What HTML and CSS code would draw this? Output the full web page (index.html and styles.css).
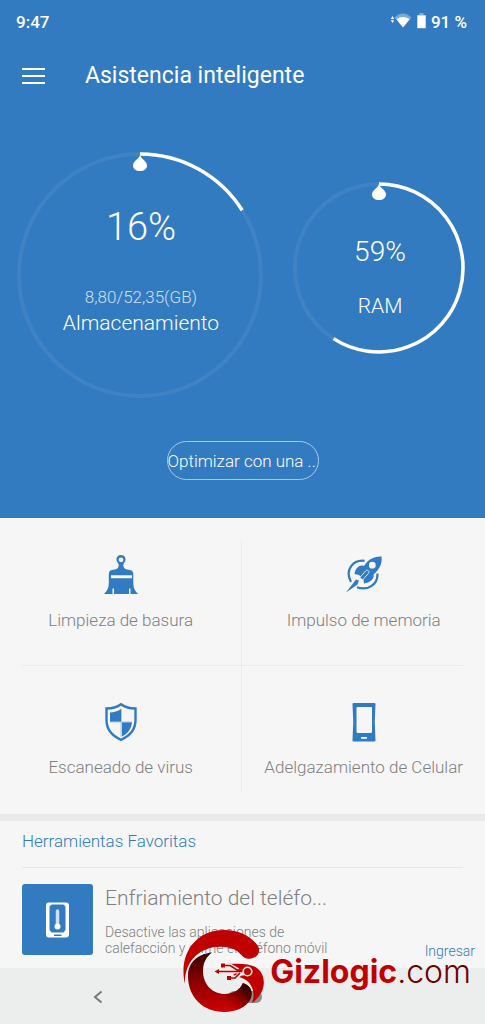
FILE: index.html
```html
<!DOCTYPE html>
<html lang="es">
<head>
<meta charset="utf-8">
<meta name="viewport" content="width=device-width, initial-scale=1">
<title>Asistencia inteligente</title>
<link rel="stylesheet" href="styles.css">
</head>
<body>
<div class="screen">
  <section class="hero">
    <div class="status">
      <span>9:47</span>
      <div class="status-icons">
        <svg width="22" height="16" viewBox="0 0 22 16" aria-hidden="true">
          <path d="M2.500 3 4.200 6H.8ZM2.500 10 .8 7.200H4.200Z" fill="#fff"/>
          <path d="M4.500 4.500Q13-3.500 21.500 4.500L13 14.500Z" fill="#fff" opacity=".35"/>
          <path d="M6.400 6.300Q13 1.500 19.600 6.300L13 14.500Z" fill="#fff"/>
        </svg>
        <svg width="9" height="16" viewBox="0 0 9 16" aria-hidden="true">
          <path d="M2.500 0h4v2H9v13.500H0V2h2.500Z" fill="#fff" opacity=".4"/>
          <path d="M.5 2.500h8v12.500h-8Z" fill="#fff"/>
        </svg>
        <span>91 %</span>
      </div>
    </div>
    <header class="bar">
      <button class="menu" type="button" aria-label="Menú">
        <svg width="23" height="16" viewBox="0 0 23 16"><path d="M0 1h23M0 8h23M0 15h23" stroke="#fff" stroke-width="2"/></svg>
      </button>
      <h1>Asistencia inteligente</h1>
    </header>
    <div class="rings">
      <div class="ring ring-storage">
        <svg width="246" height="246" viewBox="0 0 246 246" aria-hidden="true">
          <circle cx="123" cy="123" r="121" fill="none" stroke="#3f83c4" stroke-width="4"/>
          <path d="M123 2A121 121 0 0 1 225.200 58.200" fill="none" stroke="#fff" stroke-width="3.500"/>
          <path d="M123 3C124 7 130 9 130 13.500C130 17 127 19 123 19S116 17 116 13.500C116 9 122 7 123 3Z" fill="#fff"/>
        </svg>
        <div class="ring-text">
          <strong>16%</strong>
          <small>8,80/52,35(GB)</small>
          <span>Almacenamiento</span>
        </div>
      </div>
      <div class="ring ring-ram">
        <svg width="172" height="172" viewBox="0 0 172 172" aria-hidden="true">
          <circle cx="86" cy="86" r="84" fill="none" stroke="#3f83c4" stroke-width="4"/>
          <path d="M86 2A84 84 0 1 1 40.500 156.600" fill="none" stroke="#fff" stroke-width="3.500"/>
          <path d="M86 2C87 6 93 8 93 12.500C93 16 90 18 86 18S79 16 79 12.500C79 8 85 6 86 2Z" fill="#fff"/>
        </svg>
        <div class="ring-text">
          <strong>59%</strong>
          <span>RAM</span>
        </div>
      </div>
    </div>
    <button class="optimize" type="button">Optimizar con una ...</button>
  </section>

  <nav class="tools">
    <a class="tool" href="#basura">
      <svg width="34" height="40" viewBox="0 0 34 40" aria-hidden="true">
        <path fill="#327bc0" fill-rule="evenodd" d="M17 0C19.700 0 21.600 2 21.600 4.600C21.600 7 19.300 8.300 19.300 10C19.300 14 22 14.300 26 15C28.500 15.500 29.300 17 29.300 19.500V28C29.300 33 31 36 34 39H26.500V33.500H25V39H10V33.500H8.500V39H0C3 36 4.800 33 4.800 28V19.500C4.800 17 5.500 15.500 8 15C12 14.300 14.700 14 14.700 10C14.700 8.300 12.400 7 12.400 4.600C12.400 2 14.300 0 17 0ZM17 2.400A2.400 2.400 0 1 0 17 7.200A2.400 2.400 0 1 0 17 2.400ZM7 20.200V23.200H28V20.200Z"/>
      </svg>
      <span>Limpieza de basura</span>
    </a>
    <a class="tool" href="#memoria">
      <svg width="36" height="40" viewBox="0 0 36 40" aria-hidden="true">
        <path d="M5 27C-1.500 15 7 4.500 18.500 5.800M31.500 18.500C32 30 21 36 11 32.200" fill="none" stroke="#327bc0" stroke-width="2.200"/>
        <path fill="#327bc0" fill-rule="evenodd" d="M35.500 1.500C36.500 9 33 15 27.500 19.500C28.500 23 25 27.500 18 28.500L17.500 24L13 20L8.500 19C9.500 12.500 14 9.500 18 11C22 4.500 28 1 35.500 1.500ZM26.300 6.800A3.400 3.400 0 1 0 26.300 13.600A3.400 3.400 0 1 0 26.300 6.800Z"/>
        <path d="M14 22.500 19.500 16C21.500 14 24 16 22.300 18.500L17 24.500" fill="#327bc0" stroke="#d8e5f2" stroke-width="1"/>
        <path d="M10 24.500 13 25.500 11.500 29.500 0 37.500Z" fill="#327bc0"/>
      </svg>
      <span>Impulso de memoria</span>
    </a>
    <a class="tool" href="#virus">
      <svg width="34" height="40" viewBox="0 0 34 40" aria-hidden="true">
        <path d="M17 2.200C21.500 5.500 26 6.500 31.500 6.500V18C31.500 27 25.500 34 17 37.800C8.500 34 2.500 27 2.500 18V6.500C8 6.500 12.500 5.500 17 2.200Z" fill="none" stroke="#327bc0" stroke-width="2.400"/>
        <path d="M17 7V20H6V10.500C10 10.500 14 9 17 7ZM17.800 20H28C27.500 27 23.500 32 17.800 34.500Z" fill="#327bc0"/>
        <path d="M6 20H17V34.500M17.500 7V20H28" fill="none" stroke="#adc8e1" stroke-width="1"/>
      </svg>
      <span>Escaneado de virus</span>
    </a>
    <a class="tool" href="#celular">
      <svg width="24" height="40" viewBox="0 0 24 40" aria-hidden="true">
        <path fill="#327bc0" fill-rule="evenodd" d="M1.500 1H22.500Q23.700 1 23.500 2.500Q22 20 23.500 38Q23.600 39.500 22.500 39.500H1.500Q.4 39.500.5 38Q2 20 .5 2.500Q.3 1 1.500 1ZM5.500 5Q4.500 5 4.500 6V29.500Q4.500 31 6 31H18.500Q20 31 20 29.500V6Q20 5 19 5ZM9 35V36.800H15V35Z"/>
      </svg>
      <span>Adelgazamiento de Celular</span>
    </a>
  </nav>

  <section class="favorites">
    <h2>Herramientas Favoritas</h2>
    <article class="favorite">
      <div class="thumb">
        <svg width="24" height="36" viewBox="0 0 24 36" aria-hidden="true">
          <path fill="#fff" fill-rule="evenodd" d="M3 .5H20Q23 .5 23 3.500V32.500Q23 35.500 20 35.500H3Q0 35.500 0 32.500V3.500Q0 .5 3 .5ZM5.500 2.500 3.500 4.500V28L5.500 30.500H17.500L19.500 28V4.500L17.500 2.500ZM8 32.500V34H15.500V32.500Z"/>
          <path d="M11.500 9V25" stroke="#cfe0f0" stroke-width="3.500" stroke-linecap="round"/>
          <circle cx="11.500" cy="24.500" r="3" fill="#fff"/>
        </svg>
      </div>
      <div class="info">
        <h3>Enfriamiento del teléfo...</h3>
        <p>Desactive las aplicaciones de calefacción y enfríe el teléfono móvil</p>
      </div>
      <a class="enter" href="#enfriamiento">Ingresar</a>
    </article>
  </section>

  <footer class="navbar">
    <button type="button" aria-label="Atrás">
      <svg width="10" height="14" viewBox="0 0 10 14"><path d="M8.500 1.500 2 7 8.500 12.500" fill="none" stroke="#777" stroke-width="2"/></svg>
    </button>
    <button type="button" aria-label="Inicio">
      <svg width="34" height="12" viewBox="0 0 34 12"><rect width="34" height="12" rx="6" fill="#8b8c8c"/></svg>
    </button>
    <span></span>
  </footer>

  <div class="watermark">
    <svg width="82" height="84" viewBox="0 0 82 84" aria-hidden="true">
      <defs>
        <linearGradient id="shade" x1=".35" y1="0" x2=".45" y2="1">
          <stop offset="0" stop-color="#3a0000"/><stop offset=".45" stop-color="#8a0000"/><stop offset="1" stop-color="#d00000"/>
        </linearGradient>
        <linearGradient id="tail" x1=".3" y1=".8" x2=".9" y2=".3">
          <stop offset="0" stop-color="#a00000" stop-opacity="0"/><stop offset="1" stop-color="#3a0000"/>
        </linearGradient>
      </defs>
      <path d="M29 22.500C14 24 5 33 5 46C5 68 21 82 41 82C53 82 64 77 68 68C69 63 70 57 60 53C57 60 50 64 42 64C29 64 20 54 20 41C20 33 23 27 29 22.500Z" fill="url(#shade)"/>
      <path d="M41 82C53 82 64 77 68 68C69 63 70 57 60 53C57 60 50 64 42 64C38 64 34 63 31 61Z" fill="url(#tail)"/>
      <path d="M2 54C-5 24 13 0 41 0C56 0 68 6 75 16C79 23 72 30 64 28.500C57 27 57 18 41 17C20 15 1 29 2 54Z" fill="#c00000"/>
      <path d="M44 34C58 33 70 34 75 39C81 44 83 54 78 63C76 67 73 70 69 73C73 62 69 52 59 48L50 45L55 41Z" fill="#c00000"/>
      <path d="M38 41.500H61M43 35.500H47L55 40M48 48H52L58 43.500H61" fill="none" stroke="#f7eeee" stroke-width="4"/>
      <path d="M35 41.500H61M41 35.500H47L54 40H60M47 48H52L57 43" fill="none" stroke="#c00000" stroke-width="1.600"/>
      <circle cx="64.500" cy="41.500" r="4.300" fill="#c00000" stroke="#f7eeee" stroke-width="1.600"/>
      <path d="M31.500 41.500 36 39V44ZM38 33.500H42V37.500H38ZM44 46H48V50H44Z" fill="#c00000"/>
    </svg>
    <span class="brand"><b>Gizlogic</b><i>.com</i></span>
  </div>
</div>
</body>
</html>
```
FILE: styles.css
```css
* { box-sizing: border-box; }
body {
  margin: 0;
  background: #f6f6f6;
  font-family: Roboto, "Liberation Sans", sans-serif;
  font-weight: 300;
  color: #808080;
}
button {
  padding: 0;
  border: 0;
  background: none;
  font: inherit;
  color: inherit;
}
a { color: inherit; text-decoration: none; }
svg { display: block; }
h1, h2, h3, p { margin: 0; font-weight: 300; }

.screen { position: relative; }
.hero {
  display: flex;
  flex-direction: column;
  padding-bottom: 38px;
  background: #327bc0;
  color: #fff;
}
.status {
  display: flex;
  justify-content: space-between;
  padding: 12px 18px 0 16px;
  font-size: 17px;
  font-weight: 500;
  line-height: 20px;
}
.status-icons { display: flex; gap: 5px; }
.status-icons svg { margin-top: 1px; }
.bar {
  display: flex;
  align-items: center;
  gap: 40px;
  padding: 26px 22px 0;
}
.bar h1 { font-size: 23px; font-weight: 400; line-height: 35px; }
.rings {
  display: flex;
  justify-content: space-between;
  align-items: flex-start;
  padding: 59px 20px 0 17px;
}
.ring { display: grid; }
.ring > * { grid-area: 1 / 1; }
.ring-text {
  display: flex;
  flex-direction: column;
  align-items: center;
  padding-left: 2px;
  font-size: 21px;
  line-height: 26px;
}
.ring-text strong { font-weight: 300; }
.ring-text small { font-size: 17px; opacity: .75; }
.ring-storage strong { padding: 52px 0 34px; font-size: 38px; line-height: 46px; }
.ring-ram { margin-top: 30px; }
.ring-ram strong { padding: 52px 0 23px; font-size: 28px; line-height: 36px; }
.optimize {
  align-self: center;
  width: 152px;
  height: 39px;
  margin-top: 43px;
  border: 1px solid #a9c9e8;
  border-radius: 20px;
  overflow: hidden;
  white-space: nowrap;
  text-align: left;
  font-size: 17px;
}

.tools {
  display: grid;
  grid-template-columns: 1fr 1fr;
  padding: 22px;
  border-bottom: 7px solid #e8e9ea;
}
.tool {
  display: flex;
  flex-direction: column;
  align-items: center;
  gap: 13px;
  height: 126px;
  padding-top: 15px;
  border: 0 solid #ececec;
  font-size: 17px;
  line-height: 24px;
  white-space: nowrap;
}
.tool:nth-child(odd) { padding-right: 22px; border-right-width: 1px; }
.tool:nth-child(even) { padding-left: 22px; }
.tool:nth-child(-n+2) { border-bottom-width: 1px; }
.tool:nth-child(n+3) { padding-top: 36px; }

.favorites { padding: 0 22px 12px; }
.favorites h2 {
  padding: 8px 0 14px;
  border-bottom: 1px solid #e8e8e8;
  color: #327bc0;
  font-size: 17px;
  line-height: 24px;
}
.favorite { display: flex; gap: 12px; padding-top: 16px; }
.thumb {
  display: grid;
  place-items: center;
  flex: none;
  width: 71px;
  height: 71px;
  border-radius: 3px;
  background: #327bc0;
}
.info { flex: 0 1 240px; }
.info h3 { font-size: 21px; line-height: 28px; }
.info p { margin-top: 12px; font-size: 14px; line-height: 16px; }
.enter {
  align-self: flex-end;
  margin: 0 -12px -6px auto;
  color: #327bc0;
  font-size: 14px;
  line-height: 22px;
}

.navbar {
  display: grid;
  grid-template-columns: 1fr 1fr 1fr;
  place-items: center;
  height: 57px;
  padding: 0 18px 0 24px;
  background: #eceeee;
}

.watermark {
  position: absolute;
  right: 14px;
  bottom: 11px;
  display: flex;
  align-items: center;
  gap: 5px;
}
.brand {
  font-family: Inter, "Liberation Sans", sans-serif;
  font-size: 32px;
  line-height: 32px;
  color: #c00000;
}
.brand b { font-weight: 700; }
.brand i { font-style: normal; font-weight: 300; color: #700000; }
```
